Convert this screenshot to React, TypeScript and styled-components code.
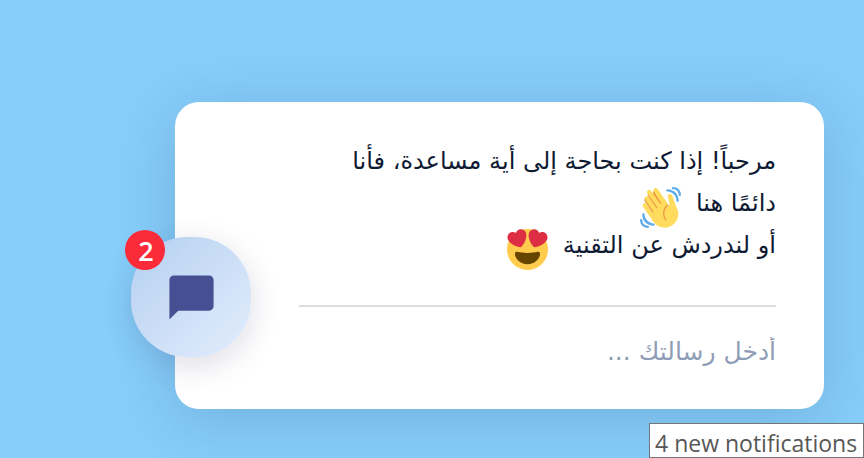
import React from "react";
import styled, { createGlobalStyle } from "styled-components";

const Global = createGlobalStyle`
  html, body { margin: 0; padding: 0; height: 100%; overflow: hidden; }
  #root { height: 100%; }
`;

const Page = styled.div`
  position: relative;
  box-sizing: border-box;
  width: 864px;
  height: 458px;
  padding: 102px 40px 0 175px;
  background: #87cefa;
  overflow: hidden;
`;

const Card = styled.section`
  position: relative;
  box-sizing: border-box;
  width: 649px;
  height: 307px;
  padding: 38px 48px 0 124px;
  background: #fff;
  border-radius: 24px;
  box-shadow: 0 10px 60px rgba(40, 70, 120, 0.22);
  direction: rtl;
`;

const Message = styled.p`
  margin: 0;
  height: 127px;
  font-family: "DejaVu Sans", sans-serif;
  font-size: 24px;
  line-height: 42px;
  color: #0f1a33;
`;

const Divider = styled.hr`
  margin: 38px 0 0;
  border: 0;
  border-top: 2px solid #dcdde0;
`;

const Input = styled.input`
  display: block;
  box-sizing: border-box;
  width: 100%;
  margin-top: 25px;
  padding: 0;
  border: 0;
  outline: 0;
  background: transparent;
  direction: rtl;
  font-family: "DejaVu Sans", sans-serif;
  font-size: 25px;
  line-height: 40px;
  &::placeholder { color: #8f9db6; opacity: 1; }
`;

const Emoji = styled.svg`
  display: inline-block;
  width: 41px;
  height: 41px;
  margin: -12px 7px -12px 0;
  vertical-align: -5px;
`;

const ChatButton = styled.button`
  position: absolute;
  left: 131px;
  top: 237px;
  display: flex;
  align-items: center;
  justify-content: center;
  width: 120px;
  height: 120px;
  padding: 0;
  border: 0;
  border-radius: 47%;
  background: linear-gradient(135deg, #b4cff0 0%, #e3edfd 100%);
  box-shadow: 0 8px 30px rgba(60, 60, 110, 0.18);
`;

const ChatIcon = styled.svg`
  width: 53px;
  height: 53px;
  fill: #474f93;
`;

const Badge = styled.span`
  position: absolute;
  left: 125px;
  top: 230px;
  display: flex;
  align-items: center;
  justify-content: center;
  width: 40px;
  height: 40px;
  padding-left: 2px;
  box-sizing: border-box;
  border-radius: 50%;
  background: #fb2b3a;
  color: #fff;
  font-family: "Open Sans", sans-serif;
  font-size: 27px;
  font-weight: 600;
`;

const Tooltip = styled.div`
  position: absolute;
  left: 649px;
  top: 423px;
  box-sizing: border-box;
  width: 215px;
  height: 35px;
  padding-left: 5px;
  border: 1px solid #767676;
  background: #fff;
  color: #575757;
  font-family: "Open Sans", sans-serif;
  font-size: 23px;
  line-height: 38px;
  white-space: nowrap;
`;

const Wave = () => (
  <Emoji viewBox="0 0 36 36">
    <path fill="#EF9645" d="M4.861 9.147c.94-.657 2.357-.531 3.201.166l-.968-1.407c-.779-1.111-.5-2.313.612-3.093 1.112-.777 4.263 1.312 4.263 1.312-.786-1.122-.639-2.544.483-3.331 1.122-.784 2.67-.513 3.456.611l10.42 14.72L25 31l-11.083-4.042L4.25 12.625c-.793-1.129-.519-2.686.611-3.478z" />
    <path fill="#FFDC5D" d="M2.695 17.336s-1.132-1.65.519-2.781c1.649-1.131 2.78.518 2.78.518l5.251 7.658c.181-.302.379-.6.6-.894L4.557 11.21s-1.131-1.649.519-2.78c1.649-1.131 2.78.518 2.78.518l6.855 9.997c.255-.208.516-.417.785-.622L6.549 5.7s-1.131-1.649.519-2.78c1.649-1.131 2.78.518 2.78.518l7.947 11.589c.292-.179.581-.334.871-.498L12.238 4.017s-1.131-1.649.518-2.78c1.649-1.131 2.78.518 2.78.518l7.854 11.454 1.194 1.742c-4.948 3.394-5.419 9.779-2.592 13.902.565.825 1.39.26 1.39.26-3.393-4.949-2.357-10.51 2.592-13.903L24.515 8.62s-.545-1.924 1.378-2.47c1.924-.545 2.47 1.379 2.47 1.379l1.685 5.004c.668 1.984 1.379 3.961 2.32 5.831 2.657 5.28 1.07 11.842-3.94 15.279-5.465 3.747-12.936 2.354-16.684-3.11L2.695 17.336z" />
    <path fill="#5DADEC" d="M12 32.042C8 32.042 3.958 28 3.958 24c0-.553-.405-1-.958-1s-1.042.447-1.042 1C1.958 30 6 34.042 12 34.042c.553 0 1-.489 1-1.042s-.447-.958-1-.958z" />
    <path fill="#5DADEC" d="M7 34c-3 0-5-2-5-5 0-.553-.447-1-1-1s-1 .447-1 1c0 4 3 7 7 7 .553 0 1-.447 1-1s-.447-1-1-1zM24 2c-.552 0-1 .448-1 1s.448 1 1 1c4 0 8 3.589 8 8 0 .552.448 1 1 1s1-.448 1-1c0-5.514-4-10-10-10z" />
    <path fill="#5DADEC" d="M29 .042c-.552 0-1 .406-1 .958s.448 1.042 1 1.042c3 0 4.958 2.225 4.958 4.958 0 .552.489 1 1.042 1s.958-.448.958-1C35.958 3.163 33 .042 29 .042z" />
  </Emoji>
);

const HeartEyes = () => (
  <Emoji viewBox="0 0 36 36">
    <path fill="#FFCC4D" d="M36 18c0 9.941-8.059 18-18 18-9.94 0-18-8.059-18-18C0 8.06 8.06 0 18 0c9.941 0 18 8.06 18 18" />
    <path fill="#664500" d="M18 21c-3.623 0-6.027-.422-9-1-.679-.131-2 0-2 2 0 4 4.595 9 11 9 6.404 0 11-5 11-9 0-2-1.321-2.132-2-2-2.973.578-5.377 1-9 1z" />
    <path fill="#DD2E44" d="M16.65 3.281c-.859-2.431-3.524-3.707-5.956-2.85-1.476.52-2.521 1.711-2.928 3.104-1.191-.829-2.751-1.1-4.225-.58C1.111 3.813-.167 6.48.692 8.911c.122.344.284.663.472.958 1.951 3.582 7.588 6.1 11.001 6.131 2.637-2.167 5.446-7.665 4.718-11.677-.038-.348-.113-.698-.233-1.042z" />
    <path fill="#DD2E44" d="M19.35 3.281c.859-2.431 3.524-3.707 5.956-2.85 1.476.52 2.521 1.711 2.929 3.104 1.191-.829 2.751-1.1 4.225-.58 2.43.858 3.707 3.525 2.85 5.956-.123.344-.284.663-.473.958-1.951 3.582-7.588 6.1-11.002 6.131-2.637-2.167-5.445-7.665-4.717-11.677.037-.348.112-.698.232-1.042z" />
  </Emoji>
);

export default function App() {
  return (
    <Page>
      <Global />
      <Card>
        <Message>
          مرحباً! إذا كنت بحاجة إلى أية مساعدة، فأنا
          <br />
          دائمًا هنا <Wave />
          <br />
          أو لندردش عن التقنية <HeartEyes />
        </Message>
        <Divider />
        <Input placeholder="أدخل رسالتك ..." />
      </Card>
      <ChatButton aria-label="chat">
        <ChatIcon viewBox="0 0 24 24">
          <path d="M20 2H4c-1.1 0-2 .9-2 2v18l4-4h14c1.1 0 2-.9 2-2V4c0-1.1-.9-2-2-2z" />
        </ChatIcon>
      </ChatButton>
      <Badge>2</Badge>
      <Tooltip>4 new notifications</Tooltip>
    </Page>
  );
}
